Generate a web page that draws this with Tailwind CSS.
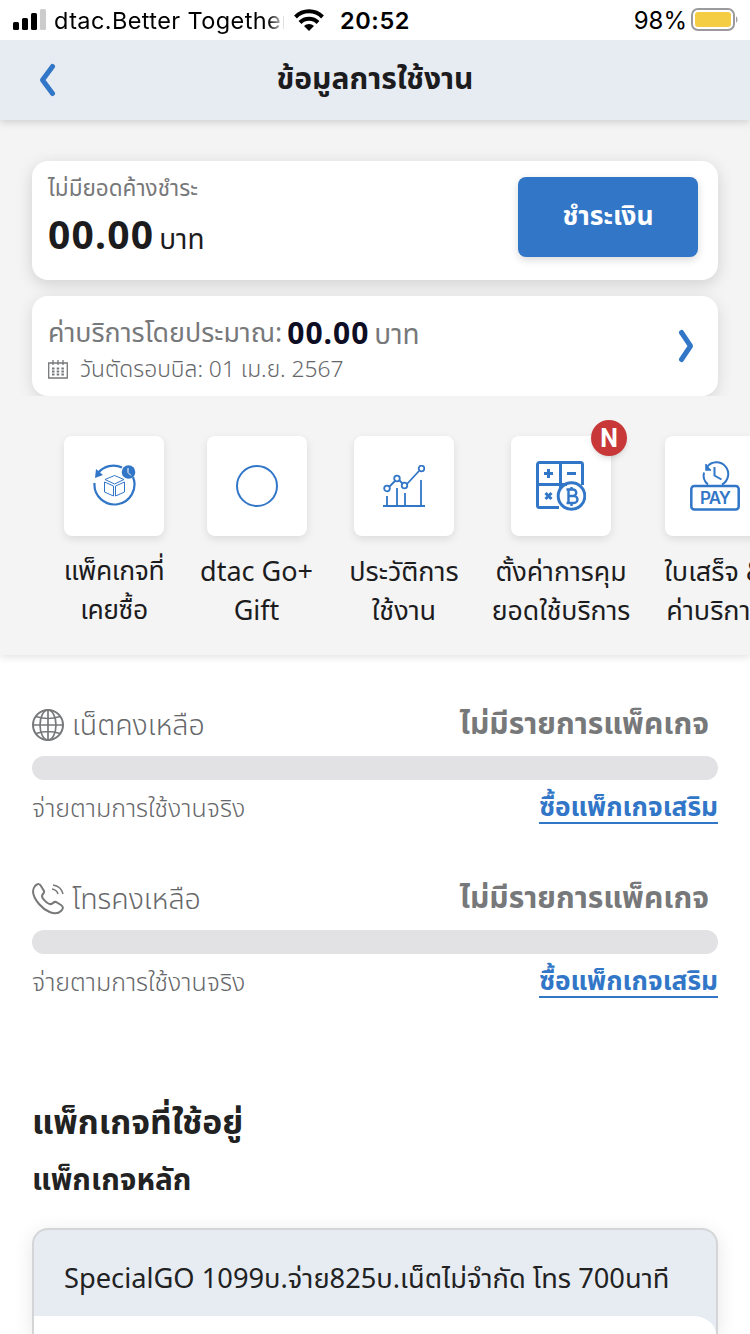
<!DOCTYPE html>
<html lang="th">
<head>
<meta charset="utf-8">
<title>ข้อมูลการใช้งาน</title>
<script src="https://cdn.jsdelivr.net/npm/@tailwindcss/browser@4"></script>
</head>
<body class="w-[750px] h-[1334px] overflow-hidden bg-white text-[#1c1c1e] whitespace-nowrap font-['Noto_Sans','Noto_Sans_Thai',sans-serif]">
<header class="relative z-20 h-10 flex items-center pl-[13px] pr-[11px] bg-white text-black text-[24px] leading-10 font-['Inter',sans-serif]">
  <svg class="w-[33px] h-[22px] shrink-0" viewBox="0 0 33 22"><rect x="0" y="13" width="6" height="8" rx="1.5"/><rect x="9" y="9" width="6" height="12" rx="1.5"/><rect x="18" y="4" width="6" height="17" rx="1.5"/><rect x="27" y="0" width="6" height="21" rx="1.5" fill="#ccc"/></svg>
  <div class="w-[230px] ml-2 pt-0.5 shrink-0 overflow-hidden text-[23.500px] tracking-[0.4px] bg-linear-to-r from-black from-[93%] to-black/10 bg-clip-text text-transparent">dtac.Better Together</div>
  <svg class="ml-[10px] w-[30px] h-[22px] shrink-0" viewBox="0 0 30 22" fill="none" stroke="#000" stroke-width="4"><path d="M1.500 8a19 19 0 0 1 27 0M6 13.500a12.500 12.500 0 0 1 18 0"/><path d="M10 17a7 7 0 0 1 10 0l-5 5z" fill="#000" stroke="none"/></svg>
  <span class="ml-[16px] pt-0.5 font-semibold text-[23.500px] tracking-[0.6px]">20:52</span>
  <span class="ml-auto pt-0.5">98%</span>
  <svg class="ml-[4px] w-[48px] h-[24px] shrink-0" viewBox="0 0 48 24"><rect x="1" y="1" width="42" height="21" rx="6" fill="none" stroke="#9b9b9d" stroke-width="2"/><rect x="4" y="4" width="36" height="15" rx="3" fill="#f4cd45"/><path d="M45 8q3 3.500 0 7z" fill="#9b9b9d"/></svg>
</header>
<nav class="relative z-10 h-20 bg-[#e7ecf3] shadow-[0_2px_8px_rgba(0,0,0,0.16)] grid grid-cols-[100px_1fr_100px] items-center">
  <svg class="ml-[38px] w-[20px] h-[34px]" viewBox="0 0 20 34" fill="none" stroke="#3276c8" stroke-width="5" stroke-linecap="round" stroke-linejoin="round"><path d="M14.500 3.500L4.500 17l10 13.500"/></svg>
  <h1 class="pb-[5px] text-center font-bold text-[30px] leading-10">ข้อมูลการใช้งาน</h1>
</nav>
<section class="bg-[#f4f4f4] h-[535px] shadow-[0_2px_8px_rgba(0,0,0,0.12)] overflow-hidden">
  <div class="h-[276px] px-8 pt-[41px] flex flex-col gap-4 overflow-hidden">
    <div class="h-[119px] shrink-0 rounded-2xl bg-white shadow-[0_4px_16px_rgba(0,0,0,0.15)] pl-4 pr-5 pt-4 flex justify-between">
      <div class="-mt-px">
        <p class="text-[22.500px] leading-6 text-[#77787a]">ไม่มียอดค้างชำระ</p>
        <p class="mt-3 leading-[44px] text-[28px]"><span class="text-[39px] font-bold tracking-[1.2px]">00.00</span><span class="ml-[5px]">บาท</span></p>
      </div>
      <button class="w-[180px] h-20 pb-[3px] rounded-lg bg-[#3276c8] text-white font-bold text-[26.500px] shadow-[0_3px_8px_rgba(0,0,0,0.15)]">ชำระเงิน</button>
    </div>
    <div class="h-[100px] shrink-0 rounded-2xl bg-white shadow-[0_4px_16px_rgba(0,0,0,0.12)] pl-4 pr-6 flex justify-between items-center">
      <div class="pt-[5px]">
        <p class="flex items-baseline text-[26.800px] leading-10 text-[#77787a]"><span>ค่าบริการโดยประมาณ:</span><b class="relative top-0.5 ml-[5px] text-[30px] tracking-[1px] text-[#0d0d24]">00.00</b><span class="relative top-0.5 ml-[5px] text-[28px]">บาท</span></p>
        <div class="flex items-center gap-3 text-[22.800px] leading-[34px] text-[#66676a]">
          <svg class="w-5 h-[19px]" viewBox="0 0 20 19" fill="none" stroke="#77787a" stroke-width="1.300"><path d="M.7 3h18.600v15H.7zM5 0v5M10 0v5M15 0v5"/><path d="M4 8.500h12M4 11.500h12M4 14.500h12" stroke-width="2" stroke-dasharray="2.500 2.200"/></svg>
          <span class="font-light">วันตัดรอบบิล: 01 เม.ย. 2567</span>
        </div>
      </div>
      <svg class="w-[16px] h-[34px]" viewBox="0 0 16 34" fill="none" stroke="#3276c8" stroke-width="5" stroke-linecap="round" stroke-linejoin="round"><path d="M3.500 3.500L12.500 17l-9 13.500"/></svg>
    </div>
  </div>
  <div class="pt-10 pl-[43px] flex text-[27px] leading-[39px] text-center">
    <div class="w-[142px] shrink-0 flex flex-col items-center">
      <div class="size-[100px] rounded-lg bg-white shadow-[0_3px_8px_rgba(0,0,0,0.1)] flex items-center justify-center">
        <svg class="size-[44px]" viewBox="0 0 44 44" fill="none" stroke="#3276c8" stroke-width="2.200"><path d="M6 9A20 20 0 0 1 30 3.500M41 13A20 20 0 1 1 2.500 19"/><path d="M4 5L3 14l8-3z" fill="#3276c8" stroke="none"/><circle cx="36.500" cy="8" r="6.800" fill="#3276c8" stroke="none"/><path d="M36 4v4.500l3 3" stroke="#fff" stroke-width="1"/><path d="M22.500 11.500l9.500 4-9.500 4.500-9.500-4.500zM12.500 18l9 4v10l-9-4zM32.500 18l-9 4v10l9-4z" stroke-width="1"/></svg>
      </div>
      <p class="mt-[15px] text-[26.500px] tracking-[-0.4px]">แพ็คเกจที่<br>เคยซื้อ</p>
    </div>
    <div class="w-[144px] shrink-0 flex flex-col items-center">
      <div class="size-[100px] rounded-lg bg-white shadow-[0_3px_8px_rgba(0,0,0,0.1)] flex items-center justify-center">
        <svg class="size-[42px]" viewBox="0 0 42 42"><circle cx="21" cy="21" r="20" fill="none" stroke="#3276c8" stroke-width="2"/></svg>
      </div>
      <p class="mt-[15px] mr-px">dtac Go+<br>Gift</p>
    </div>
    <div class="w-[150px] shrink-0 flex flex-col items-center">
      <div class="size-[100px] rounded-lg bg-white shadow-[0_3px_8px_rgba(0,0,0,0.1)] flex items-center justify-center">
        <svg class="size-[42px]" viewBox="0 0 42 42" fill="none" stroke="#3276c8" stroke-width="1.800"><path d="M0 41h42M4 31v10M14 23v18M22 28v13M38 15v26M6 22l6-6M16 15l4 4M24 19L36 6"/><circle cx="4" cy="23.500" r="2.800"/><circle cx="14" cy="13.500" r="2.800"/><circle cx="21.500" cy="20.500" r="2.800"/><circle cx="38.500" cy="3.500" r="2.800"/></svg>
      </div>
      <p class="mt-[15px]">ประวัติการ<br>ใช้งาน</p>
    </div>
    <div class="w-[164px] shrink-0 flex flex-col items-center">
      <div class="relative size-[100px] rounded-lg bg-white shadow-[0_3px_8px_rgba(0,0,0,0.1)] flex items-center justify-center">
        <svg class="size-[50px]" viewBox="0 0 50 50" fill="none" stroke="#3276c8" stroke-width="3"><path d="M23 46.500H3.500a2 2 0 0 1-2-2v-41a2 2 0 0 1 2-2h41a2 2 0 0 1 2 2V24M1 23.500h30M24.500 1v26M8 12.500h9M12.500 8v9M31 12.500h9M9.500 32l6 6M15.500 32l-6 6"/><circle cx="35.500" cy="35" r="13.300"/><path d="M32.500 28.500v13.500M30.500 28.500h6.500a3 3 0 0 1 0 6.500h-4.500M32.500 35h5.500a3.300 3.300 0 0 1 0 7h-7.500M35.500 26v3M35.500 42v3" stroke-width="2.400"/></svg>
        <span class="absolute -top-4 left-20 size-9 rounded-full bg-[#c83838] text-white font-bold font-[Roboto,sans-serif] text-[25px] leading-[37px] shadow-md">N</span>
      </div>
      <p class="mt-[15px] text-[26.700px]">ตั้งค่าการคุม<br>ยอดใช้บริการ</p>
    </div>
    <div class="w-[144px] shrink-0 flex flex-col items-center">
      <div class="size-[100px] rounded-lg bg-white shadow-[0_3px_8px_rgba(0,0,0,0.1)] flex items-center justify-center">
        <svg class="size-[50px]" viewBox="0 0 50 50" fill="none" stroke="#3276c8" stroke-width="2.500"><rect x="1.300" y="25" width="47.400" height="23.500" rx="3"/><path d="M18 23.500a11.800 11.800 0 0 1-4-12M17 6a11.800 11.800 0 1 1 15 17.500M24.500 6v8.500l7 4" stroke-width="2"/><path d="M16 3v6h5" fill="#3276c8" stroke-width="1.500"/><text x="10" y="43" font-family="Inter" font-size="17" font-weight="600" textLength="31" fill="#3276c8" stroke="none">PAY</text></svg>
      </div>
      <p class="mt-[15px]">ใบเสร็จ &amp;<br>ค่าบริการ</p>
    </div>
  </div>
</section>
<main class="px-8 pt-[44px] text-[#77787a]">
  <section class="h-[174px]">
    <div class="h-[57px] pb-[5px] pr-[9px] flex items-center">
      <svg class="size-8" viewBox="0 0 32 32" fill="none" stroke="#77787a" stroke-width="2"><circle cx="16" cy="16" r="15"/><ellipse cx="16" cy="16" rx="8" ry="15" stroke-width="1.700"/><path d="M16 1v30M1 16h30M4 7.500q12 4 24 0M4 24.500q12-4 24 0" stroke-width="1.700"/></svg>
      <span class="ml-2 pb-0.5 text-[28.600px] font-light text-[#66676a]">เน็ตคงเหลือ</span><b class="ml-auto pb-[5px] text-[30px]">ไม่มีรายการแพ็คเกจ</b>
    </div>
    <div class="h-6 rounded-full bg-[#e2e2e4]"></div>
    <div class="flex justify-between items-start pt-2"><span class="text-[25px] leading-[38px] font-light text-[#66676a]">จ่ายตามการใช้งานจริง</span><a class="h-9 text-[26.300px] leading-9 font-bold text-[#3276c8] border-b-2">ซื้อแพ็กเกจเสริม</a></div>
  </section>
  <section class="h-[174px]">
    <div class="h-[57px] pb-[5px] pr-[9px] flex items-center">
      <svg class="size-8" viewBox="0 0 32 32" fill="none" stroke="#77787a" stroke-width="2"><path d="M3 3C6 0 8 1 9 3l3 5c1 2-2 3-2 5 0 3 6 8 8 8 3 1 3-3 6-2l5 3c3 2 2 4 0 6-6 6-17-1-22-7C2 15-1 8 3 3z"/><path d="M20 6q5 1 6 5M21 2q8 1 10 9" stroke-width="1.500"/></svg>
      <span class="ml-2 pb-0.5 text-[28.600px] font-light text-[#66676a]">โทรคงเหลือ</span><b class="ml-auto pb-[5px] text-[30px]">ไม่มีรายการแพ็คเกจ</b>
    </div>
    <div class="h-6 rounded-full bg-[#e2e2e4]"></div>
    <div class="flex justify-between items-start pt-2"><span class="text-[25px] leading-[38px] font-light text-[#66676a]">จ่ายตามการใช้งานจริง</span><a class="h-9 text-[26.300px] leading-9 font-bold text-[#3276c8] border-b-2">ซื้อแพ็กเกจเสริม</a></div>
  </section>
  <h2 class="mt-[44px] text-[33.700px] leading-[60px] font-bold text-[#222]">แพ็กเกจที่ใช้อยู่</h2>
  <h3 class="text-[29.800px] leading-[56px] font-bold text-[#222]">แพ็กเกจหลัก</h3>
  <article class="mt-[21px] h-[106px] rounded-t-2xl border-2 border-b-0 border-[#d4d5d7] bg-[#e7ecf3] overflow-hidden shadow-[0_4px_20px_rgba(0,0,0,0.1)]">
    <p class="h-[86px] pl-[30px] text-[27.250px] leading-[96px] text-[#222]">SpecialGO 1099บ.จ่าย825บ.เน็ตไม่จำกัด โทร 700นาที</p>
    <div class="h-[18px] bg-white rounded-tr-[32px_24px]"></div>
  </article>
</main>
</body>
</html>
